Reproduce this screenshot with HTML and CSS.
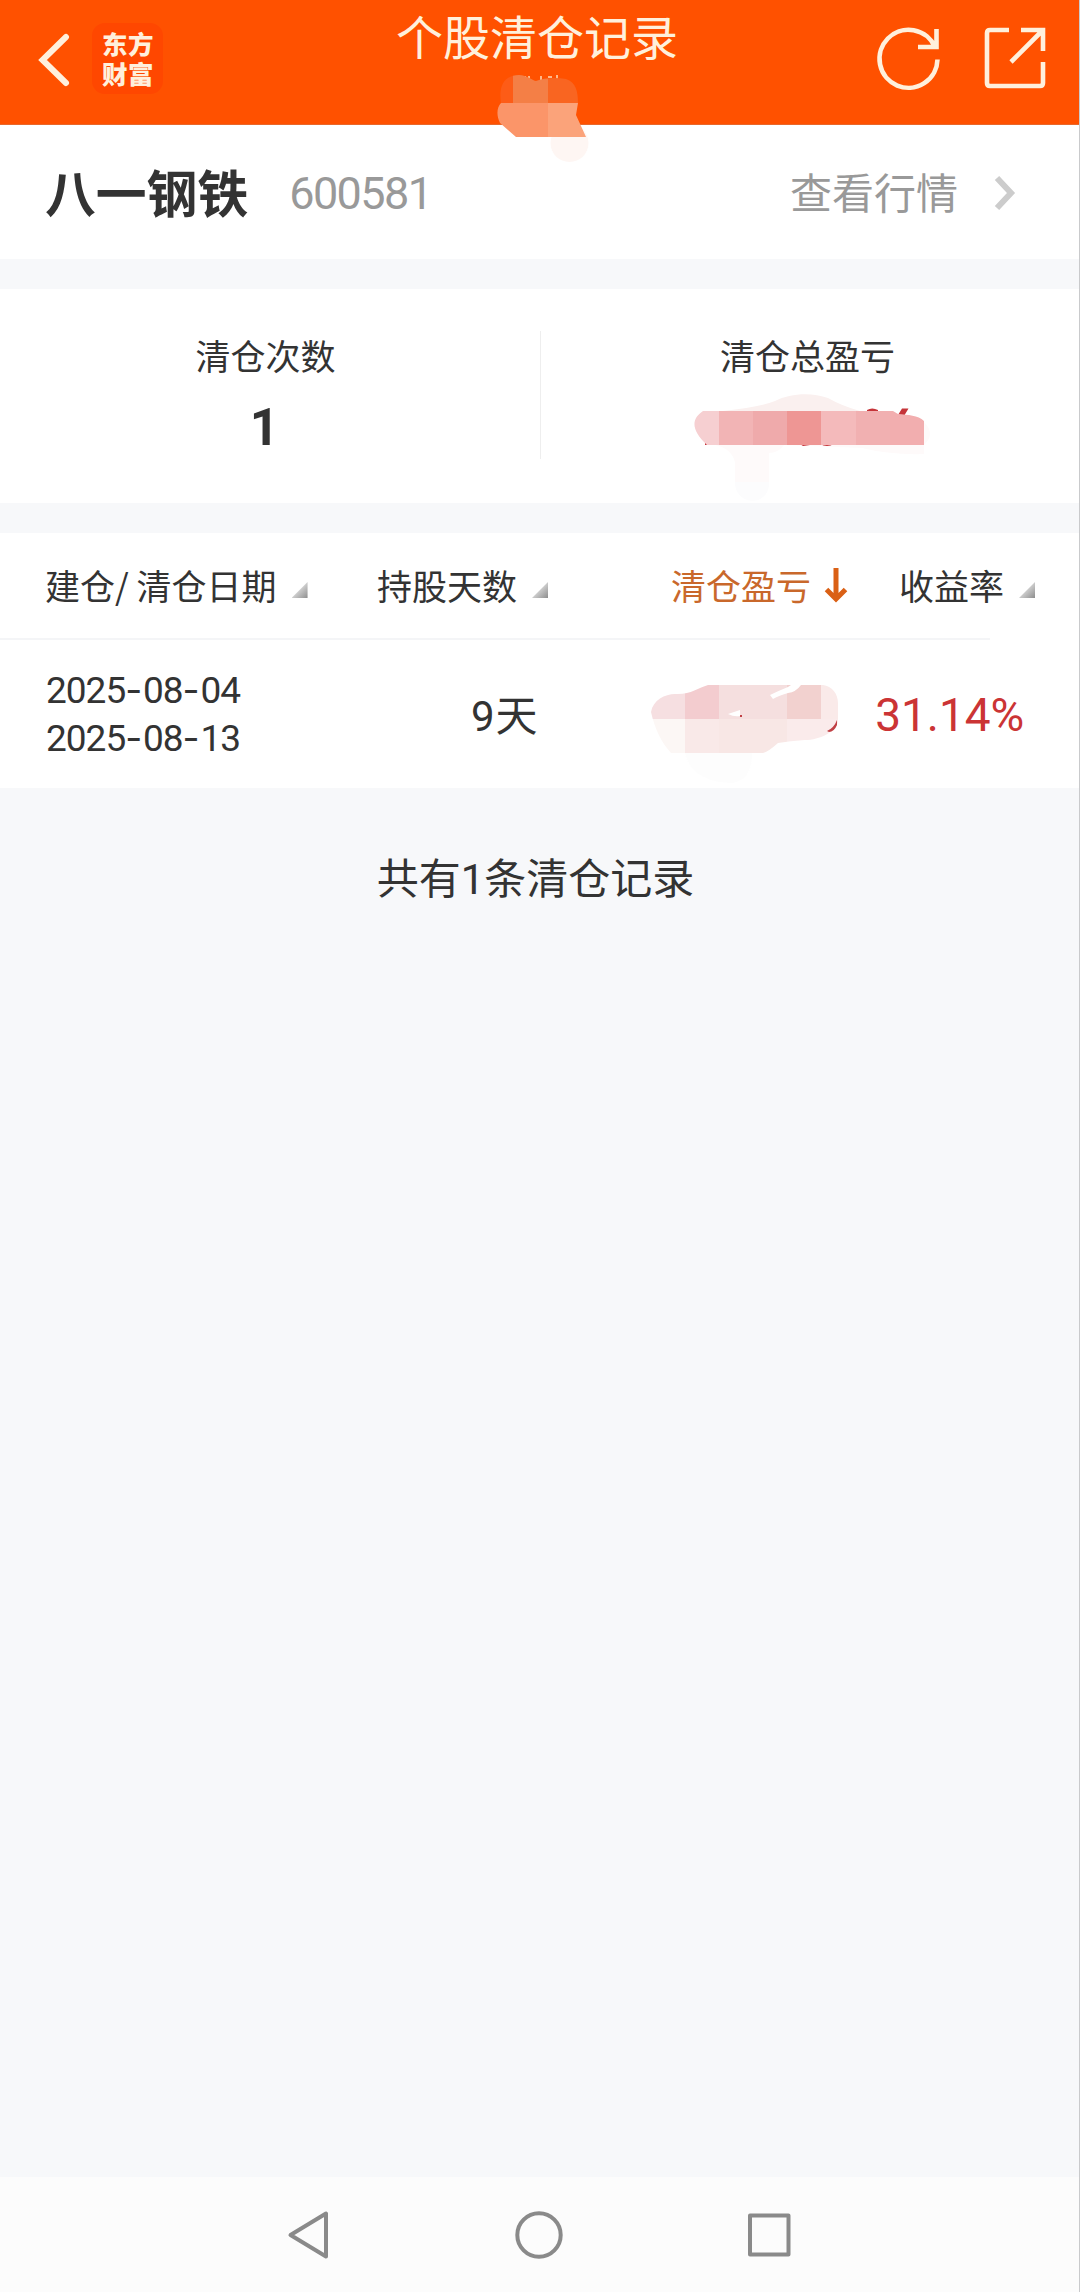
FILE: index.html
```
<!DOCTYPE html>
<html lang="zh-CN">
<head>
    <meta charset="UTF-8">
    <title>个股清仓记录</title>
    <link rel="stylesheet" href="styles.css">
</head>
<body>
    <div class="page">
        <header class="header">
            <svg class="back" width="32" height="56" viewBox="0 0 32 56"><path d="M28 5 4.500 28 28 51"/></svg>
            <div class="logo">东方<br>财富</div>
            <h1 class="title">个股清仓记录</h1>
            <svg class="refresh" width="66" height="66" viewBox="0 0 66 66"><path d="M61.500 33.500A29 29 0 1 1 59 21M60.500 3V21H42"/></svg>
            <svg class="share" width="62" height="62" viewBox="0 0 62 62"><path d="M25 3H6Q3 3 3 6V56Q3 59 6 59H56Q59 59 59 56V35M37 3H59V24M27 35 58 4"/></svg>
            <!-- 遮挡 -->
            <svg class="mask" width="200" height="100" viewBox="440 70 200 100">
                <clipPath id="m1"><path d="M501 103C498 84 506 75 519 75C527 75 533 81 536 81C543 78 556 77 566 79C576 82 578 92 578 103L576 115L586 137H516L500 123C496 115 497 107 501 103Z"/></clipPath>
                <circle cx="569.500" cy="143" r="19" fill="#fef6f3"/>
                <path d="M521 77h5M529 76v4M541 76v4M548 77h4M557 75v4" stroke="#ffb98a" stroke-width="2" fill="none"/>
                <g clip-path="url(#m1)">
                    <rect x="490" y="70" width="23" height="33" fill="#fd5c17"/>
                    <rect x="513" y="70" width="35" height="33" fill="#f47f46"/>
                    <rect x="548" y="70" width="40" height="33" fill="#f96521"/>
                    <rect x="490" y="103" width="58" height="34" fill="#fb9569"/>
                    <rect x="548" y="103" width="40" height="34" fill="#fba37a"/>
                </g>
            </svg>
        </header>

        <div class="stock">
            <span class="name">八一钢铁</span>
            <span class="code">600581</span>
            <a class="quote">查看行情</a>
            <svg width="24" height="38" viewBox="0 0 24 38"><path d="M4 4 18 19 4 34"/></svg>
        </div>

        <div class="stats">
            <div class="stat">
                <div class="label">清仓次数</div>
                <div class="value">1</div>
            </div>
            <div class="stat">
                <div class="label">清仓总盈亏</div>
            </div>
            <svg class="mask" width="260" height="120" viewBox="680 385 260 120">
                <clipPath id="m2"><path d="M703 411C691 419 691 430 707 445H924V421C918 415 908 415 898 414L893 411Z"/></clipPath>
                <path d="M723 411Q760 407 775 401C790 393 812 392 828 398Q842 406 860 411Z" fill="#faf0ef"/>
                <path d="M715 445H924V454Q890 455 862 448L784 445Q778 453 769 453V482H735V462Q731 448 715 445ZM924 422Q936 434 924 445Z" fill="#fefafa"/>
                <path d="M735 482H769V485C767 506 738 506 735 485Z" fill="#fcfcfd"/>
                <path d="M867 410Q872 407 878 410V412H867ZM898 415 902 408.500H908.500L904 416ZM800 444H810V445L803 446ZM820 444H834Q827 448 820 444ZM705 443H708V445H705Z" fill="#c53439"/>
                <g clip-path="url(#m2)">
                    <rect x="690" y="411" width="29" height="34" fill="#f6cfd1"/>
                    <rect x="719" y="411" width="34" height="34" fill="#f2b4b5"/>
                    <rect x="753" y="411" width="34" height="34" fill="#efaaab"/>
                    <rect x="787" y="411" width="34" height="34" fill="#ee9694"/>
                    <rect x="821" y="411" width="35" height="34" fill="#f4babb"/>
                    <rect x="856" y="411" width="34" height="34" fill="#f1b0b1"/>
                    <rect x="890" y="411" width="34" height="34" fill="#f2aeaf"/>
                </g>
            </svg>
        </div>

        <div class="table">
            <div class="thead">
                <div class="th">建仓/ 清仓日期<i class="sort"></i></div>
                <div class="th">持股天数<i class="sort"></i></div>
                <div class="th active">清仓盈亏<svg width="24" height="36" viewBox="0 0 24 36"><path d="M12 1V31M2.500 22.500 12 32 21.500 22.500"/></svg></div>
                <div class="th">收益率<i class="sort"></i></div>
            </div>
            <div class="row">
                <div class="date">2025<b>-</b>08<b>-</b>04<br>2025<b>-</b>08<b>-</b>13</div>
                <div class="days">9天</div>
                <div class="rate">31.14%</div>
                <svg class="mask" width="220" height="140" viewBox="640 645 220 140">
                    <clipPath id="m3"><path d="M708 685H823C832 686 838 694 838 703V722C835 732 820 740 805 740Q790 741 778 743Q768 752 763 753H671C662 743 655 730 651 712C653 700 665 694 675 694C690 695 698 688 708 685Z"/></clipPath>
                    <path d="M685 753Q692 782 732 783Q752 780 752 753Z" fill="#fdfdfd"/>
                    <g clip-path="url(#m3)">
                        <rect x="645" y="685" width="40" height="34" fill="#f6dfe1"/>
                        <rect x="685" y="685" width="34" height="34" fill="#f3cccf"/>
                        <rect x="719" y="685" width="68" height="34" fill="#f5dfdf"/>
                        <rect x="787" y="685" width="34" height="34" fill="#f2d1cf"/>
                        <rect x="821" y="685" width="20" height="34" fill="#faeae9"/>
                        <rect x="645" y="719" width="40" height="34" fill="#fcf7f5"/>
                        <rect x="685" y="719" width="34" height="34" fill="#f9e9e8"/>
                        <rect x="719" y="719" width="68" height="34" fill="#f8e7e5"/>
                        <rect x="787" y="719" width="54" height="34" fill="#faebeb"/>
                    </g>
                    <path d="M770 695Q778 691 788 687L791 685H801Q796 692 788 693Q778 696 773 699ZM728 714 740 710V716Q734 717 728 714Z" fill="#fff"/>
                    <path d="M740 715h2v2h-2ZM827 731Q834 728 837 720V725Q834 732 829 732Z" fill="#c04045"/>
                </svg>
            </div>
        </div>

        <div class="total">共有<span>1</span>条清仓记录</div>

        <nav class="nav">
            <svg width="46" height="50" viewBox="0 0 46 50"><path d="M40 3.500V46.500L4.500 25Z"/></svg>
            <svg width="50" height="50" viewBox="0 0 50 50"><circle cx="25" cy="25" r="21.700"/></svg>
            <svg width="46" height="50" viewBox="0 0 46 50"><rect x="4" y="5.500" width="38.500" height="39"/></svg>
        </nav>
    </div>
</body>
</html>
```

FILE: styles.css
```
* {
    box-sizing: border-box;
}
body {
    margin: 0;
    font-family: Roboto, "Noto Sans CJK SC", sans-serif;
    color: #333;
    background-color: #f7f8fa;
}
.page {
    width: 1080px;
    height: 2292px;
    display: flex;
    flex-direction: column;
    border-right: 1px solid #c9cacc;
}
svg {
    display: block;
    flex: none;
}
.mask {
    position: absolute;
    z-index: 1;
}

/* 顶部 */
.header {
    position: relative;
    height: 125px;
    padding-left: 38px;
    display: flex;
    align-items: flex-start;
    background-color: #ff5100;
    border-bottom: 1px solid #e8682c;
    color: #fff0dc;
}
.header path {
    fill: none;
}
.back, .refresh, .share {
    stroke: #fff0dc;
    stroke-width: 4.6;
}
.back {
    margin-top: 32px;
    stroke-width: 6;
    stroke-linecap: round;
}
.logo {
    width: 71px;
    height: 71px;
    margin: 23px 0 0 22px;
    padding: 7px 0 0 1px;
    border-radius: 13px;
    background-color: #ff4700;
    text-align: center;
    font: 900 25.500px/30px Roboto, "Noto Sans CJK SC", sans-serif;
    letter-spacing: 0.500px;
}
.title {
    margin: 0 0 0 233px;
    width: 474px;
    font: 400 47px/70px "Noto Sans CJK SC", sans-serif;
}
.refresh {
    margin-top: 26px;
    margin-left: 6px;
}
.share {
    margin-top: 27px;
    margin-left: 42px;
}
.header .mask {
    left: 440px;
    top: 70px;
}

/* 股票名称 */
.stock {
    height: 134px;
    padding: 0 62px 0 45px;
    display: flex;
    align-items: center;
    background-color: #fff;
}
.name {
    padding-bottom: 3px;
    font-size: 50.800px;
    font-weight: 700;
}
.code {
    margin-left: 41px;
    padding-top: 3px;
    font-size: 45px;
    letter-spacing: -1.600px;
    color: #999;
}
.quote {
    margin-left: auto;
    margin-right: 35px;
    padding-bottom: 3px;
    font-size: 42px;
    color: #999;
}
.stock svg {
    margin-top: 2px;
}
.stock path {
    fill: none;
    stroke: #ccc;
    stroke-width: 6;
}

/* 统计 */
.stats {
    position: relative;
    height: 214px;
    margin-top: 30px;
    padding-top: 42px;
    display: grid;
    grid-template-columns: 541px 1fr;
    background-color: #fff;
}
.stat {
    height: 128px;
    padding-right: 5px;
    text-align: center;
}
.stat:first-child {
    padding-right: 9px;
    border-right: 1px solid #eee;
}
.label {
    font: 400 35px/48px "Noto Sans CJK SC", sans-serif;
}
.value {
    margin-top: 17px;
    padding-right: 2px;
    font-size: 51px;
    line-height: 64px;
    font-weight: 700;
}
.stats .mask {
    left: 680px;
    top: 96px;
}

/* 表格 */
.table {
    margin-top: 30px;
    height: 255px;
    background-color: #fff;
}
.thead {
    height: 105px;
    padding: 0 0 1px 45px;
    display: grid;
    grid-template-columns: 332px 294px 228px 1fr;
}
.th {
    display: flex;
    align-items: center;
    font: 400 35px/50px "Noto Sans CJK SC", sans-serif;
    white-space: pre;
}
.th.active {
    color: #c9682b;
}
.th svg {
    margin-left: 13px;
}
.th path {
    fill: none;
    stroke: #da6015;
    stroke-width: 5;
}
.sort {
    width: 16px;
    height: 16px;
    margin: 10px 0 0 15px;
    background: linear-gradient(135deg, #ccc 50%, #8d8d8d);
    clip-path: polygon(100% 0, 100% 100%, 0 100%);
}
.row {
    position: relative;
    height: 150px;
    padding: 0 55px 0 45px;
    display: flex;
    align-items: center;
    background: linear-gradient(#f4f5f7, #f4f5f7) no-repeat 0 0 / 990px 2px;
}
.date {
    width: 426px;
    padding: 2px 0 0 1px;
    font-size: 37px;
    line-height: 47px;
    letter-spacing: -1px;
}
.date b {
    font-family: Inter, sans-serif;
    font-weight: 400;
    letter-spacing: 0.800px;
}
.days {
    padding-bottom: 2px;
    font-size: 42px;
    letter-spacing: 1px;
}
.rate {
    margin-left: auto;
    padding-top: 4px;
    font-size: 46px;
    letter-spacing: -0.100px;
    color: #cb3435;
}
.row .mask {
    left: 640px;
    top: 7px;
}
.total {
    margin-top: 60px;
    padding-right: 8px;
    text-align: center;
    font-size: 42px;
    line-height: 64px;
}

/* 系统导航 */
.nav {
    height: 115px;
    margin-top: auto;
    padding: 0 287px 0 286px;
    display: flex;
    justify-content: space-between;
    align-items: center;
    background-color: #fcfcfc;
}
.nav svg * {
    fill: none;
    stroke: #8a8a8a;
    stroke-width: 4;
    stroke-linejoin: round;
}
```
